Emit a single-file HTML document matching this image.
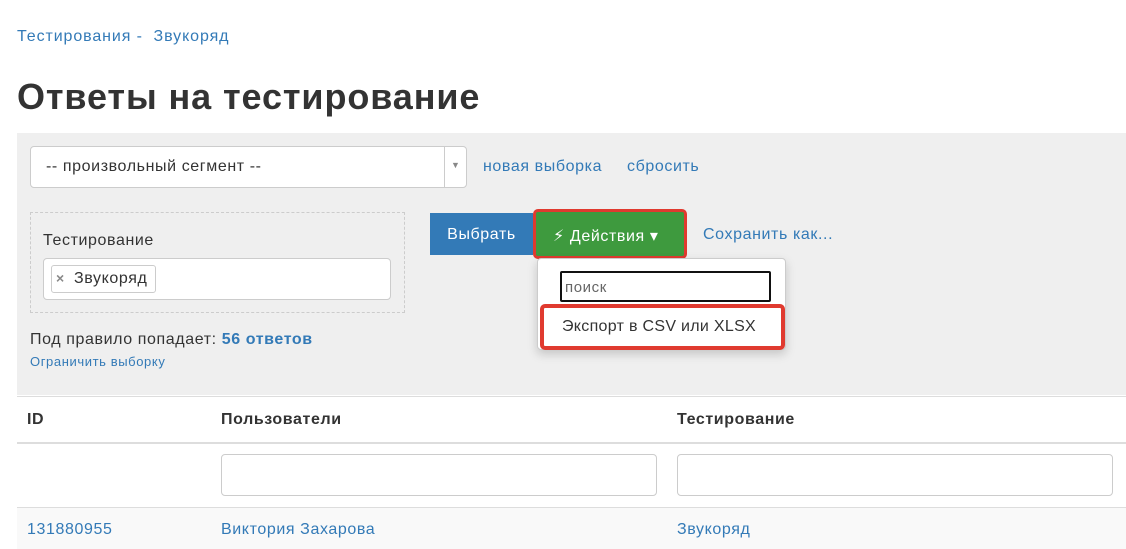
<!DOCTYPE html>
<html><head><meta charset="utf-8"><style>
*{box-sizing:border-box}
body{margin:0;width:1126px;height:549px;overflow:hidden;background:#fff;font-family:"Liberation Sans","DejaVu Sans",sans-serif;color:#333;position:relative;letter-spacing:0.6px}
.a{position:absolute}
a,.lnk{color:#337ab7;text-decoration:none}
</style></head><body>
<div class="a lnk" style="left:17px;top:28px;font-size:16px;letter-spacing:0.9px">Тестирования -&nbsp; Звукоряд</div>
<div class="a" style="left:17px;top:76px;font-size:36px;font-weight:bold;color:#333;letter-spacing:0.9px">Ответы на тестирование</div>
<div class="a" style="left:17px;top:133px;width:1109px;height:262px;background:#efefef"></div>
<div class="a" style="left:30px;top:146px;width:437px;height:42px;background:#fff;border:1px solid #ccc;border-radius:4px"></div>
<div class="a" style="left:444px;top:147px;width:1px;height:40px;background:#ccc"></div>
<div class="a" style="left:451px;top:160px;font-size:9px;color:#888">▼</div>
<div class="a" style="left:46px;top:158px;font-size:16px">-- произвольный сегмент --</div>
<div class="a lnk" style="left:483px;top:158px;font-size:16px">новая выборка</div>
<div class="a lnk" style="left:627px;top:158px;font-size:16px">сбросить</div>
<div class="a" style="left:30px;top:212px;width:375px;height:101px;border:1px dashed #ccc"></div>
<div class="a" style="left:43px;top:232px;font-size:16px">Тестирование</div>
<div class="a" style="left:43px;top:258px;width:348px;height:42px;background:#fff;border:1px solid #ccc;border-radius:4px"></div>
<div class="a" style="left:51px;top:265px;width:105px;height:28px;border:1px solid #ccc;border-radius:3px;background:#fff"></div>
<div class="a" style="left:56px;top:270px;font-size:14px;color:#888;font-weight:bold">×</div>
<div class="a" style="left:74px;top:270px;font-size:16px">Звукоряд</div>
<div class="a" style="left:30px;top:331px;font-size:16px">Под правило попадает: <b class="lnk">56 ответов</b></div>
<div class="a lnk" style="left:30px;top:354px;font-size:13px">Ограничить выборку</div>
<div class="a" style="left:430px;top:213px;width:103px;height:42px;background:#337ab7;color:#fff;font-size:16px;text-align:center;line-height:44px">Выбрать</div>
<div class="a" style="left:533px;top:209px;width:154px;height:50px;border:3px solid #e03a2f;border-radius:5px;background:#3e9a3e"></div>
<div class="a" style="left:553px;top:226px;font-size:16px;color:#fff">⚡ Действия ▾</div>
<div class="a lnk" style="left:703px;top:226px;font-size:16px">Сохранить как...</div>
<div class="a" style="left:537px;top:258px;width:249px;height:92px;background:#fff;border:1px solid #ccc;border-radius:4px;box-shadow:0 4px 10px rgba(0,0,0,.18)"></div>
<div class="a" style="left:560px;top:271px;width:211px;height:31px;border:2px solid #111;border-radius:2px;background:#fff"></div>
<div class="a" style="left:565px;top:279px;font-size:15px;color:#666">поиск</div>
<div class="a" style="left:540px;top:304px;width:245px;height:46px;border:4px solid #e03a2f;border-radius:5px;background:#fff"></div>
<div class="a" style="left:562px;top:318px;font-size:16px;letter-spacing:0.3px">Экспорт в CSV или XLSX</div>
<div class="a" style="left:17px;top:396px;width:1109px;height:1px;background:#ddd"></div>
<div class="a" style="left:27px;top:411px;font-size:16px;font-weight:bold">ID</div>
<div class="a" style="left:221px;top:411px;font-size:16px;font-weight:bold">Пользователи</div>
<div class="a" style="left:677px;top:411px;font-size:16px;font-weight:bold">Тестирование</div>
<div class="a" style="left:17px;top:442px;width:1109px;height:2px;background:#ddd"></div>
<div class="a" style="left:221px;top:454px;width:436px;height:42px;border:1px solid #ccc;border-radius:4px"></div>
<div class="a" style="left:677px;top:454px;width:436px;height:42px;border:1px solid #ccc;border-radius:4px"></div>
<div class="a" style="left:17px;top:507px;width:1109px;height:1px;background:#ddd"></div>
<div class="a" style="left:17px;top:508px;width:1109px;height:41px;background:#f9f9f9"></div>
<div class="a lnk" style="left:27px;top:521px;font-size:16px">131880955</div>
<div class="a lnk" style="left:221px;top:521px;font-size:16px">Виктория Захарова</div>
<div class="a lnk" style="left:677px;top:521px;font-size:16px">Звукоряд</div>
</body></html>
